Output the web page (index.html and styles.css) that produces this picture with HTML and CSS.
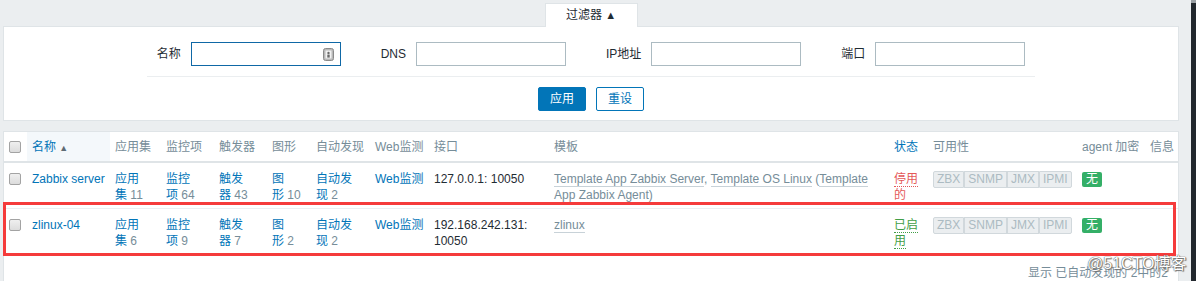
FILE: index.html
```html
<!DOCTYPE html>
<html lang="zh-CN">
<head>
    <meta charset="UTF-8">
    <meta name="viewport" content="width=device-width, initial-scale=1.0">
    <title>主机</title>
    <link rel="stylesheet" href="styles.css">
</head>
<body>
    <div class="page">
        <div class="main">
            <div class="filter-tabs">
                <span class="filter-tab">过滤器 <span class="arrow">▲</span></span>
            </div>
            <div class="filter-box">
                <div class="filter-grid">
                    <label class="field">
                        <span>名称</span>
                        <span class="input-wrap">
                            <input type="text" class="focused">
                            <svg class="input-icon" width="11" height="13" viewBox="0 0 11 13">
                                <rect x="0.5" y="0.5" width="10" height="12" rx="2" fill="#b9b9b9" stroke="#8a8a8a"/>
                                <rect x="2.5" y="2.5" width="6" height="8" fill="#f2f2f2"/>
                                <circle cx="5.5" cy="5" r="1.2" fill="#6a6a6a"/>
                                <rect x="4.3" y="6.6" width="2.4" height="3" fill="#6a6a6a"/>
                            </svg>
                        </span>
                    </label>
                    <label class="field">
                        <span>DNS</span>
                        <input type="text">
                    </label>
                    <label class="field">
                        <span>IP地址</span>
                        <input type="text">
                    </label>
                    <label class="field">
                        <span>端口</span>
                        <input type="text">
                    </label>
                </div>
                <div class="filter-buttons">
                    <button class="btn">应用</button>
                    <button class="btn btn-alt">重设</button>
                </div>
            </div>

            <div class="list-box">
                <table class="list-table">
                    <colgroup>
                        <col style="width: 23px">
                        <col style="width: 83px">
                        <col style="width: 51px">
                        <col style="width: 53px">
                        <col style="width: 53px">
                        <col style="width: 44px">
                        <col style="width: 59px">
                        <col style="width: 59px">
                        <col style="width: 120px">
                        <col style="width: 340px">
                        <col style="width: 39px">
                        <col style="width: 149px">
                        <col style="width: 68px">
                        <col style="width: 33px">
                    </colgroup>
                    <thead>
                        <tr>
                            <th><span class="checkbox"></span></th>
                            <th class="sorted"><a class="link">名称</a> <span class="sort-arrow">▲</span></th>
                            <th>应用集</th>
                            <th>监控项</th>
                            <th>触发器</th>
                            <th>图形</th>
                            <th>自动发现</th>
                            <th>Web监测</th>
                            <th>接口</th>
                            <th>模板</th>
                            <th><a class="link">状态</a></th>
                            <th>可用性</th>
                            <th>agent 加密</th>
                            <th>信息</th>
                        </tr>
                    </thead>
                    <tbody>
                        <tr>
                            <td><span class="checkbox"></span></td>
                            <td><a class="link">Zabbix server</a></td>
                            <td class="narrow"><a class="link">应用集</a>&nbsp;<span class="count">11</span></td>
                            <td class="narrow"><a class="link">监控项</a>&nbsp;<span class="count">64</span></td>
                            <td class="narrow"><a class="link">触发器</a>&nbsp;<span class="count">43</span></td>
                            <td class="narrow"><a class="link">图形</a>&nbsp;<span class="count">10</span></td>
                            <td class="narrow"><a class="link">自动发现</a>&nbsp;<span class="count">2</span></td>
                            <td class="nowrap"><a class="link">Web监测</a></td>
                            <td>127.0.0.1: 10050</td>
                            <td class="templates"><a class="tpl">Template App Zabbix Server</a>, <a class="tpl">Template OS Linux</a> (<a class="tpl">Template App Zabbix Agent</a>)</td>
                            <td><a class="state state-off">停用的</a></td>
                            <td>
                                <span class="avail">ZBX</span><span class="avail">SNMP</span><span class="avail">JMX</span><span class="avail">IPMI</span>
                            </td>
                            <td><span class="enc">无</span></td>
                            <td></td>
                        </tr>
                        <tr>
                            <td><span class="checkbox"></span></td>
                            <td><a class="link">zlinux-04</a></td>
                            <td class="narrow"><a class="link">应用集</a>&nbsp;<span class="count">6</span></td>
                            <td class="narrow"><a class="link">监控项</a>&nbsp;<span class="count">9</span></td>
                            <td class="narrow"><a class="link">触发器</a>&nbsp;<span class="count">7</span></td>
                            <td class="narrow"><a class="link">图形</a>&nbsp;<span class="count">2</span></td>
                            <td class="narrow"><a class="link">自动发现</a>&nbsp;<span class="count">2</span></td>
                            <td class="nowrap"><a class="link">Web监测</a></td>
                            <td>192.168.242.131: 10050</td>
                            <td class="templates"><a class="tpl">zlinux</a></td>
                            <td><a class="state state-on">已启用</a></td>
                            <td>
                                <span class="avail">ZBX</span><span class="avail">SNMP</span><span class="avail">JMX</span><span class="avail">IPMI</span>
                            </td>
                            <td><span class="enc">无</span></td>
                            <td></td>
                        </tr>
                    </tbody>
                </table>
                <div class="table-stats">显示 已自动发现的 2中的2</div>
            </div>

            <!-- 截图上的标注框和水印 -->
            <div class="mark-box"></div>
            <div class="watermark">@51CTO博客</div>
        </div>
        <div class="scrollbar"></div>
    </div>
</body>
</html>
```

FILE: styles.css
```css
html, body {
    margin: 0;
    height: 100%;
}
body {
    font-family: 'Liberation Sans', Arial, 'Noto Sans CJK SC', sans-serif;
    font-size: 12px;
    line-height: 16px;
    color: #1f2c33;
    background-color: #ebeef0;
    overflow: hidden;
}
.page {
    display: flex;
    height: 100%;
}
.main {
    position: relative;
    flex: 1;
    padding: 3px 12px 0 3px;
    overflow: hidden;
}
.scrollbar {
    width: 5px;
    background-color: #22282e;
    border-top: 3px solid #9aa0a4;
}

/* 过滤器 */
.filter-tabs {
    text-align: center;
    height: 23px;
}
.filter-tab {
    display: inline-block;
    box-sizing: border-box;
    width: 93px;
    height: 24px;
    line-height: 22px;
    background-color: white;
    border: 1px solid #dfe4e7;
    border-bottom: none;
    position: relative;
    z-index: 1;
}
.arrow {
    font-size: 11px;
}
.filter-box {
    background-color: white;
    border: 1px solid #dfe4e7;
    padding: 15px 0 9px;
}
.filter-grid {
    display: flex;
    gap: 40px;
    width: max-content;
    margin: 0 auto;
    padding: 0 10px 10px;
    border-bottom: 1px solid #ebeef0;
}
.field {
    display: flex;
    align-items: center;
    gap: 10px;
}
.input-wrap {
    position: relative;
    display: flex;
}
input {
    box-sizing: border-box;
    width: 150px;
    height: 24px;
    margin: 0;
    border: 1px solid #acbbc2;
    background-color: white;
    font: inherit;
    padding: 0 5px;
}
input.focused {
    border-color: #0f68a6;
}
.input-icon {
    position: absolute;
    right: 7px;
    top: 6px;
}
.filter-buttons {
    display: flex;
    justify-content: center;
    gap: 10px;
    margin-top: 10px;
}
.btn {
    box-sizing: border-box;
    height: 24px;
    padding: 0 11px;
    border: 1px solid #0275b8;
    border-radius: 2px;
    background-color: #0275b8;
    color: white;
    font: inherit;
}
.btn-alt {
    background-color: white;
    color: #0275b8;
}

/* 列表 */
.list-box {
    margin-top: 10px;
    background-color: white;
    border: 1px solid #dfe4e7;
    height: 160px;
}
.list-table {
    width: 100%;
    border-collapse: collapse;
    table-layout: fixed;
}
.list-table th {
    text-align: left;
    font-weight: normal;
    color: #768d99;
    white-space: nowrap;
    padding: 7px 5px 5px;
    border-bottom: 2px solid #dfe4e7;
    vertical-align: top;
}
.list-table th.sorted {
    background-color: #f4f8fb;
}
.sort-arrow {
    color: #5d6b73;
    font-size: 9px;
}
.list-table td {
    padding: 8px 5px 5px;
    vertical-align: top;
    border-bottom: 1px solid #ebeef0;
}
.list-table td.narrow {
    padding-right: 8px;
}
.list-table td.nowrap {
    white-space: nowrap;
}
.checkbox {
    display: inline-block;
    box-sizing: border-box;
    width: 12px;
    height: 12px;
    vertical-align: -2px;
    border: 1px solid #a3a3a3;
    border-radius: 2px;
    background: linear-gradient(#efefef, #dcdcdc);
}
.link {
    color: #0275b8;
}
.count {
    color: #768d99;
}
.templates {
    color: #768d99;
}
.tpl {
    color: #768d99;
    border-bottom: 1px solid #c8d2d8;
}
.state {
    border-bottom: 1px dotted;
}
.state-off {
    color: #e45959;
}
.state-on {
    color: #429e47;
}
.avail {
    display: inline-block;
    padding: 0 3px;
    line-height: 15px;
    border: 1px solid #d1d8dc;
    background-color: #ebeef0;
    color: #acbbc2;
}
.avail:first-child {
    border-radius: 2px 0 0 2px;
}
.avail:last-child {
    border-radius: 0 2px 2px 0;
}
.enc {
    display: inline-block;
    padding: 0 4px;
    line-height: 15px;
    border-radius: 2px;
    background-color: #34af67;
    color: white;
}
.table-stats {
    text-align: right;
    color: #768d99;
    padding: 10px 10px 0;
}

/* 标注 */
.mark-box {
    position: absolute;
    left: 3px;
    top: 202px;
    width: 1173px;
    height: 54px;
    box-sizing: border-box;
    border: 3px solid #f53b3b;
}
.watermark {
    position: absolute;
    left: 1087px;
    top: 253px;
    font-size: 16px;
    line-height: 22px;
    color: white;
    text-shadow: 0 0 1px #555, 0 0 1px #555, 1px 1px 1px #777;
    white-space: nowrap;
}
```
